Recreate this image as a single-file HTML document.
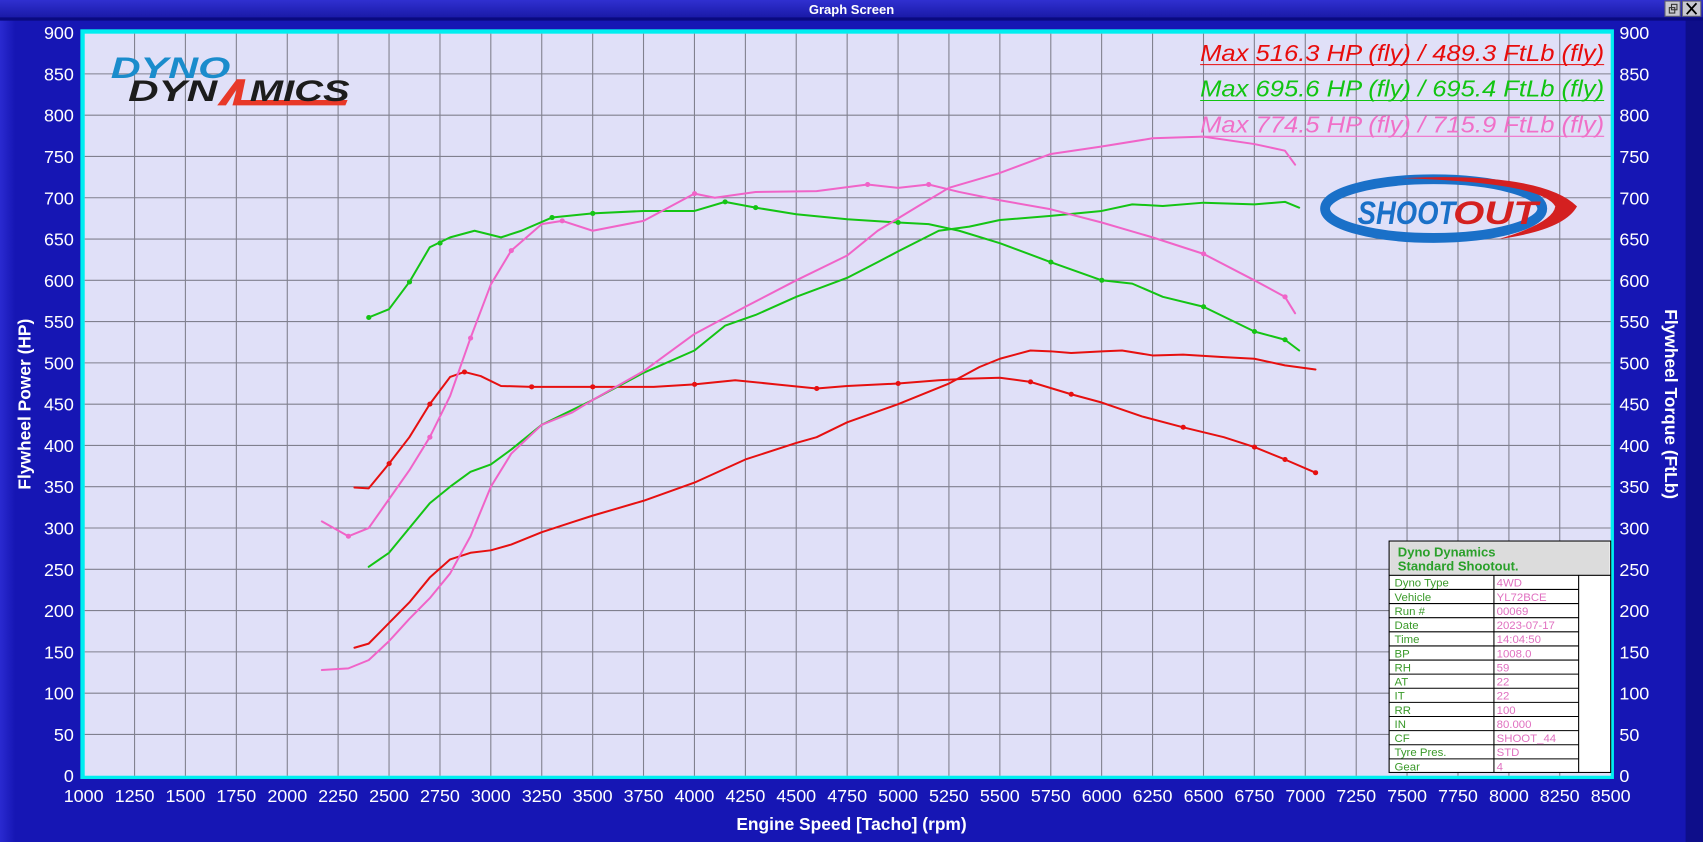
<!DOCTYPE html>
<html><head><meta charset="utf-8"><style>
html,body{margin:0;padding:0;background:#1616b4;overflow:hidden}
svg{display:block}
text{font-family:"Liberation Sans",Arial,sans-serif}
</style></head><body>
<svg width="1703" height="842" viewBox="0 0 1568 775" preserveAspectRatio="none" xmlns="http://www.w3.org/2000/svg">
<defs>
<linearGradient id="tb" x1="0" y1="0" x2="0" y2="1"><stop offset="0" stop-color="#3030d0"/><stop offset="1" stop-color="#1a1aa8"/></linearGradient>
<linearGradient id="side" x1="0" y1="0" x2="1" y2="0"><stop offset="0" stop-color="#2a2ad0"/><stop offset="1" stop-color="#1616b4"/></linearGradient>
</defs>
<rect x="0" y="0" width="1568" height="775" fill="#1616b4"/>
<rect x="0" y="18" width="14" height="757" fill="url(#side)"/>
<rect x="1552" y="18" width="16" height="757" fill="#0e0e8a"/>
<rect x="0" y="0" width="1568" height="16" fill="url(#tb)"/>
<rect x="0" y="16" width="1568" height="3" fill="#0a0a80"/>
<text x="784" y="13" font-size="12" font-weight="bold" fill="#fff" text-anchor="middle">Graph Screen</text>
<rect x="1533" y="1" width="14" height="14" fill="#c8c8d0" stroke="#606070"/>
<rect x="1549" y="1" width="17" height="14" fill="#c8c8d0" stroke="#606070"/>
<path d="M1553 3 L1562 13 M1562 3 L1553 13" stroke="#000" stroke-width="1.6"/>
<rect x="1537" y="7" width="5" height="5" fill="none" stroke="#333"/><rect x="1539" y="4" width="5" height="5" fill="none" stroke="#333"/>

<rect x="74" y="27" width="1412" height="690" fill="#00eef0"/>
<rect x="78" y="31" width="1405" height="683" fill="#e0e0f8"/>
<g stroke="#80808e" stroke-width="1">
<path d="M123.9 31V714M170.7 31V714M217.6 31V714M264.5 31V714M311.3 31V714M358.2 31V714M405.1 31V714M451.9 31V714M498.8 31V714M545.7 31V714M592.5 31V714M639.4 31V714M686.3 31V714M733.1 31V714M780 31V714M826.9 31V714M873.7 31V714M920.6 31V714M967.5 31V714M1014.3 31V714M1061.2 31V714M1108.1 31V714M1154.9 31V714M1201.8 31V714M1248.7 31V714M1295.5 31V714M1342.4 31V714M1389.3 31V714M1436.1 31V714"/>
<path d="M78 68H1483M78 106H1483M78 144H1483M78 182H1483M78 220H1483M78 258H1483M78 296H1483M78 334H1483M78 372H1483M78 410H1483M78 448H1483M78 486H1483M78 524H1483M78 562H1483M78 600H1483M78 638H1483M78 676H1483"/>
</g>
<g fill="#fff" font-size="16.5" text-anchor="end">
<text x="68" y="36">900</text><text x="68" y="74">850</text><text x="68" y="112">800</text><text x="68" y="150">750</text><text x="68" y="188">700</text><text x="68" y="226">650</text><text x="68" y="264">600</text><text x="68" y="302">550</text><text x="68" y="340">500</text><text x="68" y="378">450</text><text x="68" y="416">400</text><text x="68" y="454">350</text><text x="68" y="492">300</text><text x="68" y="530">250</text><text x="68" y="568">200</text><text x="68" y="606">150</text><text x="68" y="644">100</text><text x="68" y="682">50</text><text x="68" y="720">0</text>
</g>
<g fill="#fff" font-size="16.5">
<text x="1491" y="36">900</text><text x="1491" y="74">850</text><text x="1491" y="112">800</text><text x="1491" y="150">750</text><text x="1491" y="188">700</text><text x="1491" y="226">650</text><text x="1491" y="264">600</text><text x="1491" y="302">550</text><text x="1491" y="340">500</text><text x="1491" y="378">450</text><text x="1491" y="416">400</text><text x="1491" y="454">350</text><text x="1491" y="492">300</text><text x="1491" y="530">250</text><text x="1491" y="568">200</text><text x="1491" y="606">150</text><text x="1491" y="644">100</text><text x="1491" y="682">50</text><text x="1491" y="720">0</text>
</g>
<g fill="#fff" font-size="16.5" text-anchor="middle">
<text x="77" y="738">1000</text><text x="123.9" y="738">1250</text><text x="170.7" y="738">1500</text><text x="217.6" y="738">1750</text><text x="264.5" y="738">2000</text><text x="311.3" y="738">2250</text><text x="358.2" y="738">2500</text><text x="405.1" y="738">2750</text><text x="451.9" y="738">3000</text><text x="498.8" y="738">3250</text><text x="545.7" y="738">3500</text><text x="592.5" y="738">3750</text><text x="639.4" y="738">4000</text><text x="686.3" y="738">4250</text><text x="733.1" y="738">4500</text><text x="780" y="738">4750</text><text x="826.9" y="738">5000</text><text x="873.7" y="738">5250</text><text x="920.6" y="738">5500</text><text x="967.5" y="738">5750</text><text x="1014.3" y="738">6000</text><text x="1061.2" y="738">6250</text><text x="1108.1" y="738">6500</text><text x="1154.9" y="738">6750</text><text x="1201.8" y="738">7000</text><text x="1248.7" y="738">7250</text><text x="1295.5" y="738">7500</text><text x="1342.4" y="738">7750</text><text x="1389.3" y="738">8000</text><text x="1436.1" y="738">8250</text><text x="1483" y="738">8500</text>
</g>
<text x="784" y="764" fill="#fff" font-size="16" font-weight="bold" text-anchor="middle">Engine Speed [Tacho] (rpm)</text>
<text transform="translate(28,372) rotate(-90)" fill="#fff" font-size="16" font-weight="bold" text-anchor="middle">Flywheel Power (HP)</text>
<text transform="translate(1533,372) rotate(90)" fill="#fff" font-size="16" font-weight="bold" text-anchor="middle">Flywheel Torque (FtLb)</text>

<g transform="translate(77,714) scale(0.18747,-0.76) translate(-1000,0)" fill="none" stroke-width="2" stroke-linejoin="round" stroke-linecap="round">
<path vector-effect="non-scaling-stroke" stroke="#e61010" d="M2330 155L2400 160L2500 185L2600 210L2700 240L2800 262L2900 270L3000 273L3100 280L3250 295L3400 307L3500 315L3750 333L4000 355L4250 383L4500 403L4600 410L4750 428L5000 450L5250 475L5400 495L5500 505L5650 515L5750 514L5850 512L6000 514L6100 515L6250 509L6400 510L6600 507L6750 505L6900 497L7050 492"/>
<path vector-effect="non-scaling-stroke" stroke="#e61010" d="M2330 349L2400 348L2500 378L2600 410L2700 450L2800 483L2870 489L2950 484L3050 472L3200 471L3500 471L3800 471L4000 474L4200 479L4400 474L4600 469L4750 472L5000 475L5200 479L5350 481L5500 482L5650 477L5850 462L6000 452L6200 435L6400 422L6600 410L6750 398L6900 383L7050 367"/>
<path vector-effect="non-scaling-stroke" stroke="#14c414" d="M2400 253L2500 270L2600 300L2700 330L2800 350L2900 368L3000 377L3100 395L3250 425L3500 455L3750 488L4000 515L4150 545L4300 558L4500 580L4750 603L4900 622L5000 635L5200 660L5350 665L5500 673L5750 678L6000 684L6150 692L6300 690L6500 694L6750 692L6900 695L6970 688"/>
<path vector-effect="non-scaling-stroke" stroke="#14c414" d="M2400 555L2500 565L2600 598L2700 640L2800 652L2920 660L3050 652L3150 660L3300 676L3500 681L3750 684L4000 684L4150 695L4300 688L4500 680L4750 674L5000 670L5150 668L5300 660L5500 645L5750 622L6000 600L6150 596L6300 580L6500 568L6750 538L6900 528L6970 515"/>
<path vector-effect="non-scaling-stroke" stroke="#f064c8" d="M2170 128L2300 130L2400 140L2500 163L2600 190L2700 215L2800 245L2900 290L3000 350L3100 390L3250 425L3400 440L3500 455L3750 490L4000 535L4250 568L4500 600L4750 630L4900 660L5000 675L5100 690L5250 712L5500 730L5750 753L6000 762L6250 772L6500 774L6750 765L6900 757L6950 740"/>
<path vector-effect="non-scaling-stroke" stroke="#f064c8" d="M2170 308L2300 290L2400 300L2500 335L2600 370L2700 410L2800 460L2900 530L3000 595L3100 636L3250 668L3350 672L3500 660L3750 672L4000 705L4100 700L4300 707L4600 708L4850 716L5000 712L5150 716L5300 707L5500 697L5750 686L6000 670L6250 652L6500 632L6750 600L6900 580L6950 560"/>
<g stroke-width="5">
<path vector-effect="non-scaling-stroke" stroke="#e61010" d="M2500 378h1M2700 450h1M2870 489h1M3200 471h1M3500 471h1M4000 474h1M4600 469h1M5000 475h1M5650 477h1M5850 462h1M6400 422h1M6750 398h1M6900 383h1M7050 367h1"/>
<path vector-effect="non-scaling-stroke" stroke="#14c414" d="M2400 555h1M2600 598h1M2750 645h1M3300 676h1M3500 681h1M4150 695h1M4300 688h1M5000 670h1M5750 622h1M6000 600h1M6500 568h1M6750 538h1M6900 528h1"/>
<path vector-effect="non-scaling-stroke" stroke="#f064c8" d="M2300 290h1M2900 530h1M3100 636h1M3350 672h1M4000 705h1M4850 716h1M5150 716h1M6500 632h1M6900 580h1M2700 410h1"/>
</g>
</g>

<g font-size="21" font-style="italic" text-anchor="end">
<text x="1477" y="56" fill="#e80c0c" textLength="372" lengthAdjust="spacingAndGlyphs">Max 516.3 HP (fly) / 489.3 FtLb (fly)</text>
<text x="1477" y="89" fill="#12c412" textLength="372" lengthAdjust="spacingAndGlyphs">Max 695.6 HP (fly) / 695.4 FtLb (fly)</text>
<text x="1477" y="122" fill="#f070c8" textLength="372" lengthAdjust="spacingAndGlyphs">Max 774.5 HP (fly) / 715.9 FtLb (fly)</text>
</g>
<path d="M1105 59.5H1477" stroke="#e80c0c"/><path d="M1105 92.5H1477" stroke="#12c412"/><path d="M1105 125.5H1477" stroke="#f070c8"/>

<text x="102" y="72" font-size="27" font-weight="900" font-style="italic" fill="#1a8ccc" textLength="110" lengthAdjust="spacingAndGlyphs">DYNO</text>
<text x="118" y="93" font-size="27" font-weight="900" font-style="italic" fill="#1c1c1c" textLength="82" lengthAdjust="spacingAndGlyphs">DYN</text>
<path d="M200 97 L218 73 L226 73 L222 92 L320 92 L318 97 L214 97 L218 82 L208 97 Z" fill="#e83828"/>
<text x="230" y="93" font-size="27" font-weight="900" font-style="italic" fill="#1c1c1c" textLength="92" lengthAdjust="spacingAndGlyphs">MICS</text>

<ellipse cx="1320" cy="192" rx="100" ry="27" fill="none" stroke="#1a70c8" stroke-width="9"/>
<path d="M1290 164 Q1420 158 1452 190 Q1440 212 1380 220 Q1430 205 1432 190 Q1420 168 1290 164Z" fill="#d42020"/>
<text x="1250" y="206" font-size="30" font-weight="900" font-style="italic" fill="#1a70c8" textLength="90" lengthAdjust="spacingAndGlyphs">SHOOT</text>
<text x="1338" y="206" font-size="30" font-weight="900" font-style="italic" fill="#d42020" textLength="78" lengthAdjust="spacingAndGlyphs">OUT</text>

<rect x="1279" y="498" width="204" height="213" fill="#fff" stroke="#000"/>
<rect x="1280" y="499" width="202" height="30" fill="#dcdcdc"/>
<text x="1287" y="512" font-size="12" font-weight="bold" fill="#2aa02a">Dyno Dynamics</text>
<text x="1287" y="525" font-size="12" font-weight="bold" fill="#2aa02a">Standard Shootout.</text>
<g stroke="#000" stroke-width="1">
<path d="M1279 529.5H1483M1279 542.5H1454M1279 555.5H1454M1279 568.5H1454M1279 581.5H1454M1279 594.5H1454M1279 607.5H1454M1279 620.5H1454M1279 633.5H1454M1279 646.5H1454M1279 659.5H1454M1279 672.5H1454M1279 685.5H1454M1279 698.5H1454M1375.5 529V711M1453.5 529V711"/>
</g>
<g font-size="10.5" fill="#3a9a2a">
<text x="1284" y="540">Dyno Type</text><text x="1284" y="553">Vehicle</text><text x="1284" y="566">Run #</text><text x="1284" y="579">Date</text><text x="1284" y="592">Time</text><text x="1284" y="605">BP</text><text x="1284" y="618">RH</text><text x="1284" y="631">AT</text><text x="1284" y="644">IT</text><text x="1284" y="657">RR</text><text x="1284" y="670">IN</text><text x="1284" y="683">CF</text><text x="1284" y="696">Tyre Pres.</text><text x="1284" y="709">Gear</text>
</g>
<g font-size="10.5" fill="#e070c0">
<text x="1378" y="540">4WD</text><text x="1378" y="553">YL72BCE</text><text x="1378" y="566">00069</text><text x="1378" y="579">2023-07-17</text><text x="1378" y="592">14:04:50</text><text x="1378" y="605">1008.0</text><text x="1378" y="618">59</text><text x="1378" y="631">22</text><text x="1378" y="644">22</text><text x="1378" y="657">100</text><text x="1378" y="670">80.000</text><text x="1378" y="683">SHOOT_44</text><text x="1378" y="696">STD</text><text x="1378" y="709">4</text>
</g>
</svg>
</body></html>
